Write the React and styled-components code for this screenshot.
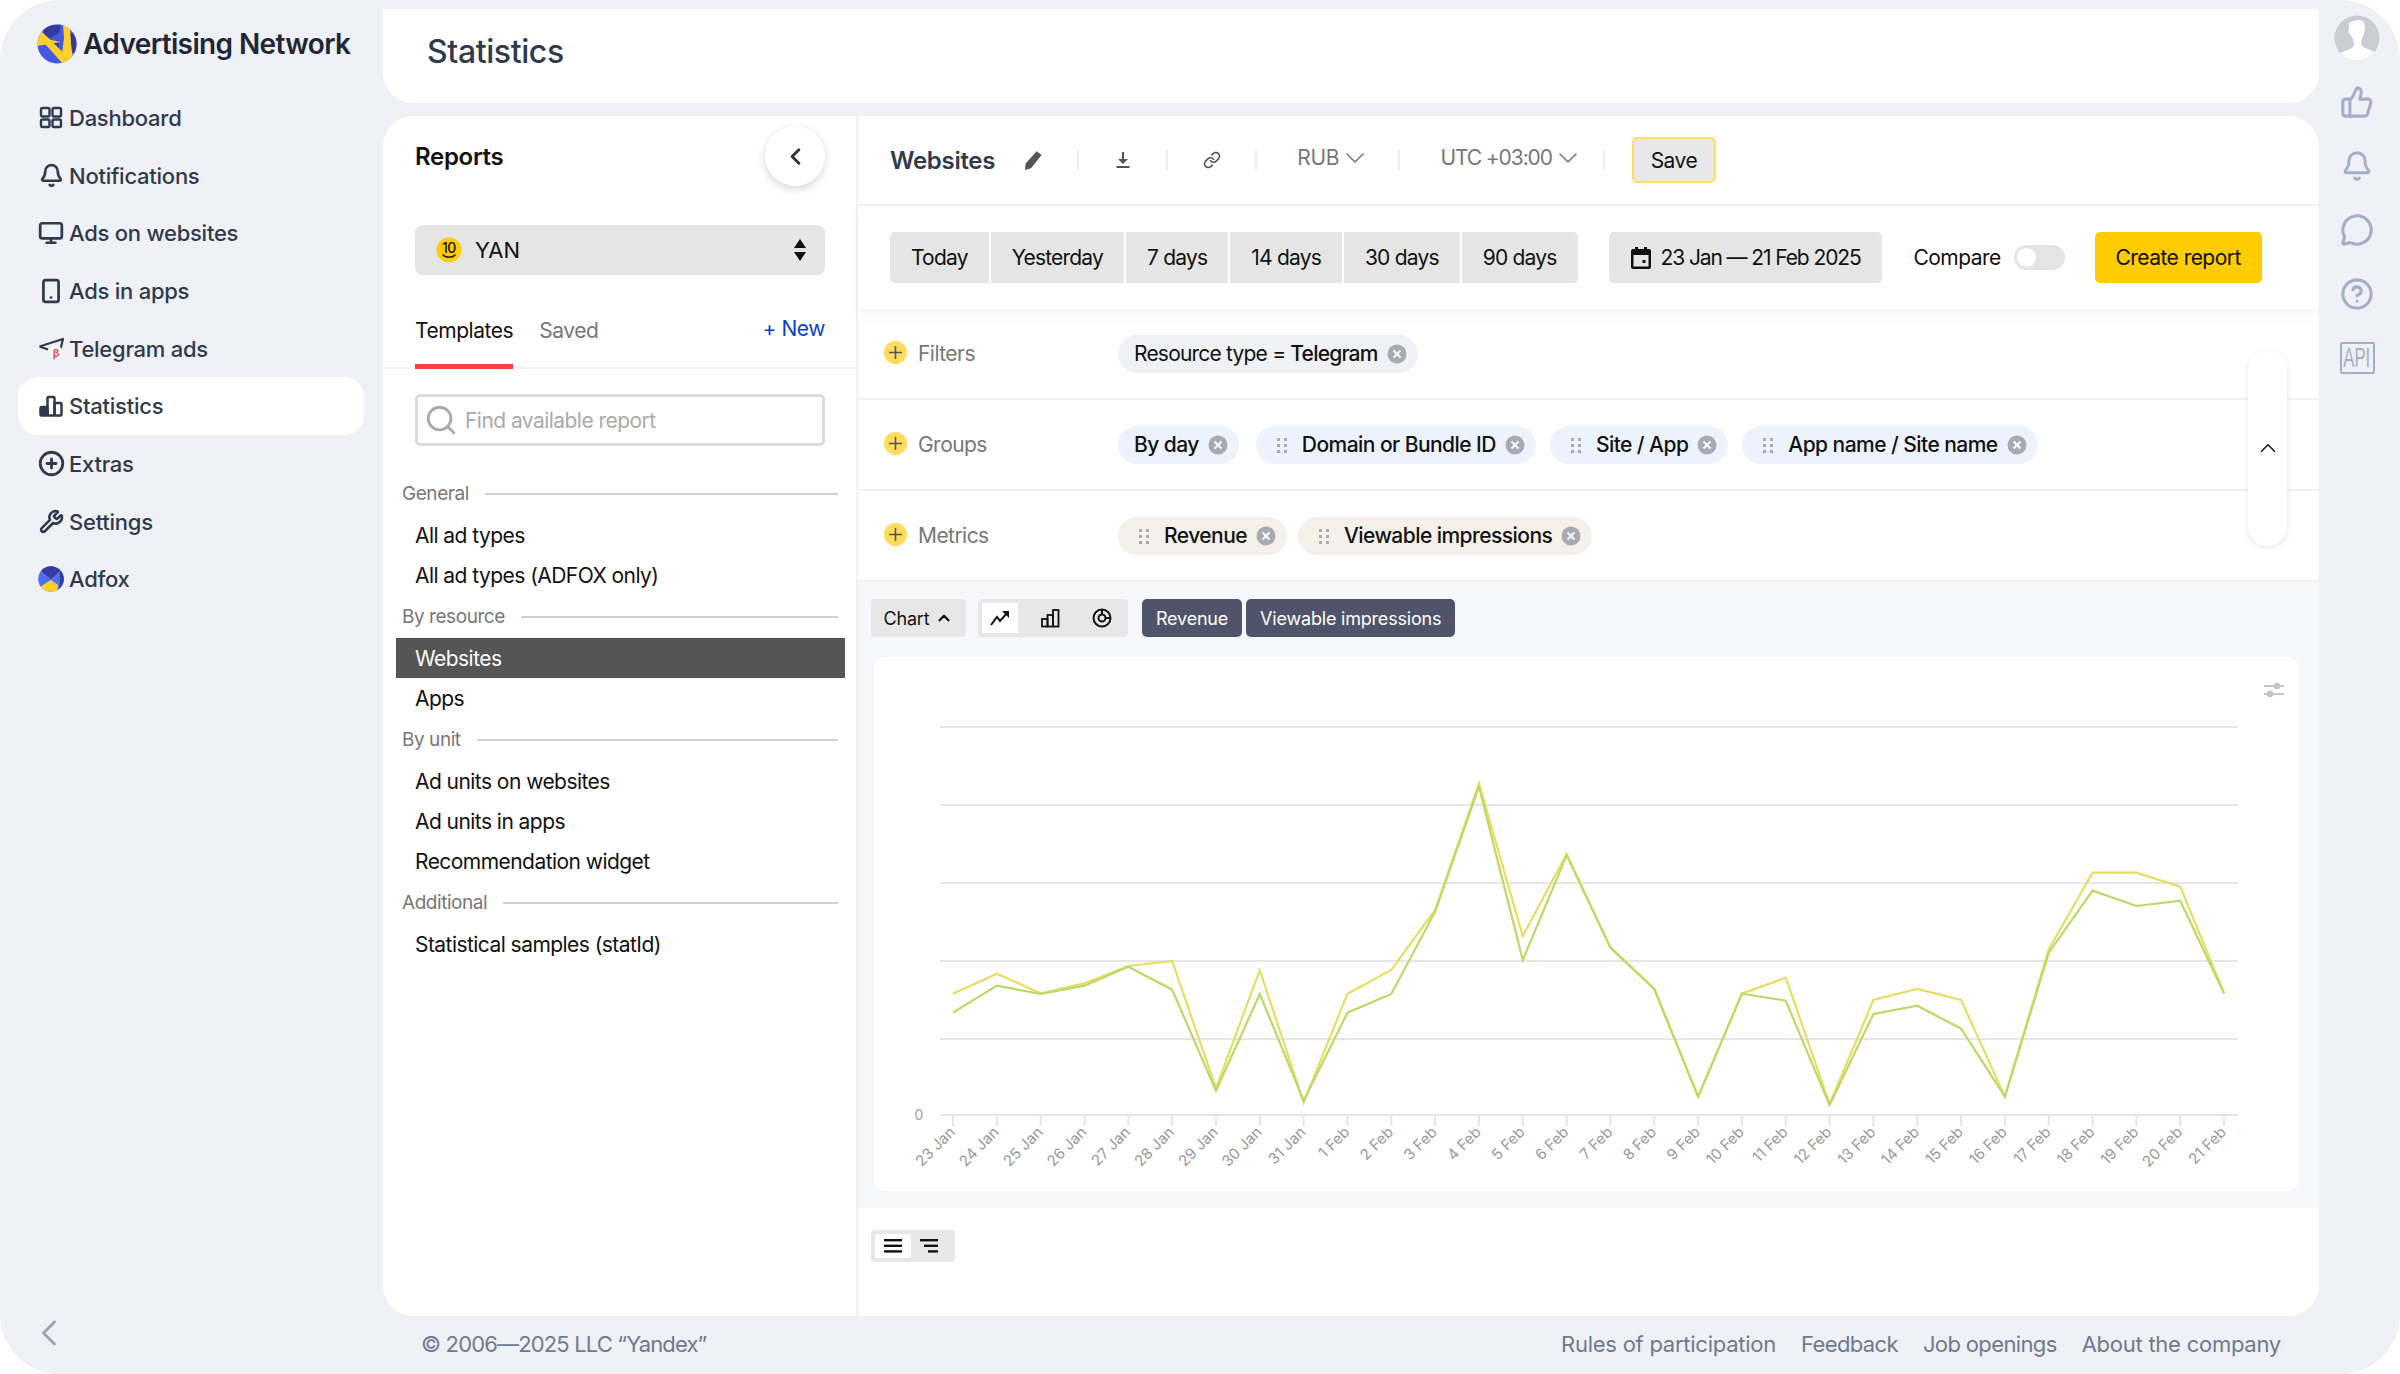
import React from "react";
import styled, { createGlobalStyle } from "styled-components";
import {
  Bell,
  ChevronDown,
  ChevronLeft,
  ChevronUp,
  CircleHelp,
  CirclePlus,
  Link,
  MessageCircle,
  Monitor,
  Search,
  Smartphone,
  ThumbsUp,
  Wrench,
} from "lucide-react";

const GlobalStyle = createGlobalStyle`
  html, body {
    margin: 0;
    padding: 0;
    background: #fff;
  }
  body {
    font-family: Inter, "Noto Sans", "Liberation Sans", sans-serif;
    color: #111;
  }
  * { box-sizing: border-box; }
`;

// ---------- shell ----------
const Shell = styled.div`
  width: 2400px;
  height: 1374px;
  display: flex;
  background: #eff1f6;
  border-radius: 60px;
  overflow: hidden;
`;

const Sidebar = styled.aside`
  width: 383px;
  flex: none;
  display: flex;
  flex-direction: column;
  padding: 0 19px 0 18px;
`;

const Brand = styled.div`
  height: 44px;
  margin-top: 22px;
  padding-left: 19px;
  display: flex;
  align-items: center;
  gap: 6px;
  font-size: 28px;
  font-weight: 600;
  letter-spacing: -0.62px;
  white-space: nowrap;
  color: #1f2736;
`;

const Nav = styled.nav`
  margin-top: 23px;
  display: flex;
  flex-direction: column;
`;

const NavItem = styled.div`
  height: 57.7px;
  padding-left: 20px;
  display: flex;
  align-items: center;
  gap: 5px;
  font-size: 22px;
  font-weight: 500;
  letter-spacing: -0.25px;
  color: #2f3a4d;
  border-radius: 20px;
  background: ${(p) => (p.$active ? "#fff" : "transparent")};

  svg {
    flex: none;
  }
`;

const IconSlot = styled.span`
  width: 26px;
  height: 26px;
  display: flex;
  align-items: center;
  justify-content: center;
  flex: none;
`;

const Collapse = styled.div`
  margin-top: auto;
  height: 63px;
  padding-left: 9px;
  color: #98a4bb;
`;

const Center = styled.div`
  width: 1936px;
  flex: none;
  display: flex;
  flex-direction: column;
  padding-top: 9px;
`;

const TopCard = styled.header`
  height: 94px;
  background: #fff;
  border-radius: 0 0 30px 30px;
  padding: 0 0 10px 44px;
  display: flex;
  align-items: center;
  font-size: 32px;
  font-weight: 500;
  letter-spacing: -0.4px;
  color: #2f3a4d;
`;

const MainCard = styled.main`
  margin-top: 13px;
  height: 1200px;
  background: #fff;
  border-radius: 30px;
  display: flex;
  overflow: hidden;
`;

const Footer = styled.footer`
  flex: 1;
  display: flex;
  align-items: center;
  justify-content: space-between;
  padding: 0 38px 2px 38px;
  font-size: 22px;
  letter-spacing: -0.25px;
  color: #6f7a90;
`;

const Copyright = styled.span`
  letter-spacing: -0.85px;
`;

const FooterLinks = styled.div`
  display: flex;
  gap: 25px;
`;

const FooterLink = styled.span`
  letter-spacing: ${(p) => (p.$tight ? -0.63 : -0.25)}px;
`;

const Rail = styled.aside`
  flex: 1;
  display: flex;
  flex-direction: column;
  align-items: center;
  padding: 15px 5px 0 0;
  color: #a3aec8;
`;

const RailSlot = styled.div`
  height: 64px;
  width: 100%;
  display: flex;
  align-items: center;
  justify-content: center;
  margin-top: ${(p) => p.$top || 0}px;
`;

const ApiMark = styled.div`
  width: 35px;
  height: 32px;
  border: 2px solid #a3aec8;
  border-radius: 2px;
  display: flex;
  align-items: center;
  justify-content: center;
  overflow: hidden;

  span {
    display: block;
    font-family: "Liberation Sans", sans-serif;
    font-size: 27px;
    line-height: 1;
    transform: scaleX(0.62);
    color: #a3aec8;
  }
`;

// ---------- reports panel ----------
const Reports = styled.section`
  width: 475px;
  flex: none;
  border-right: 2px solid #f2f2f2;
  display: flex;
  flex-direction: column;
`;

const ReportsHead = styled.div`
  height: 80px;
  padding: 0 31px 0 32px;
  display: flex;
  align-items: center;
  justify-content: space-between;
  font-size: 24px;
  font-weight: 600;
  letter-spacing: -0.3px;
`;

const RoundButton = styled.div`
  width: 60px;
  height: 60px;
  border-radius: 50%;
  background: #fff;
  box-shadow: 0 3px 8px rgba(0, 0, 0, 0.16);
  display: flex;
  align-items: center;
  justify-content: center;
  color: #333;
`;

const SourceSelect = styled.div`
  margin: 29px 31px 0 32px;
  height: 50px;
  border-radius: 8px;
  background: #e5e5e5;
  padding: 0 18px 0 21px;
  display: flex;
  align-items: center;
  gap: 13px;
  font-size: 22px;
`;

const SelectLabel = styled.span`
  flex: 1;
`;

const Tabs = styled.div`
  margin-top: 24px;
  height: 70px;
  padding: 0 31px 0 32px;
  border-bottom: 2px solid #f2f2f2;
  display: flex;
  gap: 26px;
  font-size: 21px;
  letter-spacing: -0.45px;
`;

const Tab = styled.div`
  height: 70px;
  padding-top: 19px;
  color: ${(p) => (p.$active ? "#111" : "#777")};
  border-bottom: ${(p) => (p.$active ? "5px solid #fc3f3d" : "0")};
`;

const NewLink = styled.div`
  margin-left: auto;
  padding-top: 17px;
  color: #0c41c8;
`;

const SearchBox = styled.div`
  margin: 25px 31px 0 32px;
  height: 52px;
  border: 3px solid #dcdcdc;
  border-radius: 5px;
  padding: 0 8px;
  display: flex;
  align-items: center;
  gap: 9px;
  font-size: 21px;
  letter-spacing: -0.55px;
  color: #aaa;

  svg {
    margin: -2px;
  }
`;

const ReportList = styled.div`
  margin: 26px 11px 0 13px;
  display: flex;
  flex-direction: column;
`;

const GroupHead = styled.div`
  height: 43px;
  padding: 0 7px 0 6px;
  display: flex;
  align-items: center;
  gap: 16px;
  font-size: 19px;
  letter-spacing: -0.45px;
  color: #777;

  &::after {
    content: "";
    flex: 1;
    height: 2px;
    background: #cfcfcf;
  }
`;

const ReportItem = styled.div`
  height: 40px;
  padding-left: 19px;
  display: flex;
  align-items: center;
  font-size: 21px;
  letter-spacing: -0.55px;
  background: ${(p) => (p.$active ? "#555" : "transparent")};
  color: ${(p) => (p.$active ? "#fff" : "#111")};
`;

// ---------- workspace ----------
const Workspace = styled.section`
  flex: 1;
  min-width: 0;
  display: flex;
  flex-direction: column;
`;

const Toolbar = styled.div`
  height: 90px;
  padding-left: 32px;
  border-bottom: 2px solid #f2f2f2;
  display: flex;
  align-items: center;
`;

const ReportTitle = styled.div`
  font-size: 24px;
  font-weight: 600;
  letter-spacing: -0.3px;
  color: #2f3a4d;
  margin-right: 28px;
`;

const ToolIcon = styled.div`
  width: 20px;
  height: 24px;
  display: flex;
  align-items: center;
  justify-content: center;
  color: #555;
`;

const ToolSep = styled.div`
  width: 2px;
  height: 20px;
  background: #eee;
  margin: 0 ${(p) => p.$right}px 0 ${(p) => p.$left}px;
`;

const Dropdown = styled.div`
  display: flex;
  align-items: center;
  gap: 8px;
  font-size: 21px;
  letter-spacing: ${(p) => p.$spacing || -0.2}px;
  color: #777;
  margin-top: -5px;

  svg {
    margin: -8px;
  }
`;

const SaveButton = styled.div`
  width: 84px;
  height: 46px;
  border: 2px solid #ffdf60;
  border-radius: 5px;
  background: #e8e8e8;
  display: flex;
  align-items: center;
  justify-content: center;
  font-size: 21px;
  letter-spacing: -0.55px;
`;

const PeriodBar = styled.div`
  height: 103px;
  padding-left: 32px;
  display: flex;
  align-items: center;
  position: relative;
  z-index: 1;
  box-shadow: 0 6px 14px rgba(0, 0, 0, 0.045);
`;

const Segments = styled.div`
  display: flex;
  gap: 2px;
  margin-right: 31px;
`;

const Segment = styled.div`
  height: 51px;
  padding: 0 21px;
  display: flex;
  align-items: center;
  background: #e5e5e5;
  font-size: 21px;
  letter-spacing: -0.8px;
  &:first-child {
    border-radius: 5px 0 0 5px;
  }
  &:last-child {
    border-radius: 0 5px 5px 0;
  }
`;

const DateButton = styled.div`
  width: 273px;
  height: 51px;
  border-radius: 5px;
  background: #e5e5e5;
  padding-left: 21px;
  display: flex;
  align-items: center;
  gap: 9px;
  font-size: 21px;
  letter-spacing: -1.1px;
`;

const CompareLabel = styled.div`
  margin-left: 32px;
  font-size: 21px;
  letter-spacing: -0.55px;
`;

const Toggle = styled.div`
  margin-left: 13px;
  width: 51px;
  height: 25px;
  border-radius: 13px;
  background: #e4e4e4;
  padding: 3px;

  &::before {
    content: "";
    display: block;
    width: 19px;
    height: 19px;
    border-radius: 50%;
    background: #fff;
  }
`;

const CreateButton = styled.div`
  margin-left: 30px;
  width: 167px;
  height: 51px;
  border-radius: 5px;
  background: #ffcc00;
  display: flex;
  align-items: center;
  justify-content: center;
  font-size: 21px;
  letter-spacing: -0.55px;
`;

const Fields = styled.div`
  position: relative;
`;

const FieldRow = styled.div`
  height: 91px;
  padding-left: 26px;
  border-bottom: 2px solid #f2f2f2;
  display: flex;
  align-items: center;
`;

const PlusDot = styled.span`
  width: 23px;
  height: 23px;
  border-radius: 50%;
  background: #ffdc60;
  color: #555;
  flex: none;
  display: flex;
  align-items: center;
  justify-content: center;
  margin-top: -2px;
`;

const FieldLabel = styled.div`
  width: 200px;
  margin-left: 11px;
  font-size: 21px;
  letter-spacing: -0.55px;
  color: #777;
`;

const CHIP_BG = { filter: "#f0f1f4", group: "#ecf3fd", metric: "#f5f1ea" };

const Chips = styled.div`
  display: flex;
  gap: ${(p) => p.$gap || 14}px;
`;

const Chip = styled.div`
  height: 38px;
  border-radius: 19px;
  padding: 0 11px 0 ${(p) => (p.$drag ? 21 : 16)}px;
  margin-right: ${(p) => (p.$drag ? 0 : 3)}px;
  background: ${(p) => CHIP_BG[p.$kind]};
  display: flex;
  align-items: center;
  font-size: 21px;
  letter-spacing: ${(p) => (p.$kind === "filter" ? -0.8 : -0.55)}px;
  white-space: pre;

  b {
    font-weight: 500;
  }
`;

const ChipText = styled.span`
  margin: 0 9px 0 ${(p) => (p.$drag ? 15 : 0)}px;
  font-weight: ${(p) => (p.$strong ? 500 : 400)};
`;

const ScrollPill = styled.div`
  position: absolute;
  right: 32px;
  top: 41px;
  width: 39px;
  height: 196px;
  border-radius: 20px;
  background: #fff;
  box-shadow: 0 2px 6px rgba(0, 0, 0, 0.09);
  display: flex;
  align-items: center;
  justify-content: center;
  color: #222;
`;

const ChartArea = styled.div`
  height: 626px;
  background: #f6f7fa;
  padding: 17px 20px 17px 13px;
  display: flex;
  flex-direction: column;
`;

const ChartControls = styled.div`
  height: 38px;
  display: flex;
  align-items: center;
  font-size: 18px;
  letter-spacing: -0.2px;
`;

const ChartMode = styled.div`
  width: 95px;
  height: 38px;
  border-radius: 4px;
  background: #e7e7e7;
  display: flex;
  align-items: center;
  justify-content: center;
  gap: 6px;
  margin-right: 12px;
`;

const ChartTypes = styled.div`
  width: 150px;
  height: 38px;
  border-radius: 4px;
  background: #e7e7e7;
  padding: 4px;
  display: flex;
  gap: 15px;
  margin-right: 14px;
`;

const ChartType = styled.div`
  width: 36px;
  height: 30px;
  display: flex;
  align-items: center;
  justify-content: center;
  background: ${(p) => (p.$active ? "#fff" : "transparent")};
`;

const MetricButton = styled.div`
  height: 38px;
  padding: 0 14px;
  border-radius: 5px;
  background: #50546a;
  color: #fff;
  display: flex;
  align-items: center;
  margin-right: 4px;
`;

const ChartCard = styled.div`
  position: relative;
  margin-top: 20px;
  margin-left: 3px;
  width: 1425px;
  height: 534px;
  border-radius: 12px;
  background: #fff;

  > svg {
    display: block;
  }
`;

const ChartSettings = styled.div`
  position: absolute;
  right: 15px;
  top: 24px;
`;

const ViewArea = styled.div`
  flex: 1;
  padding: 22px 0 0 13px;
`;

const ViewToggle = styled.div`
  width: 84px;
  height: 32px;
  border-radius: 4px;
  background: #e7e7e7;
  padding: 4px;
  display: flex;
`;

const ViewOption = styled.div`
  width: 36px;
  height: 24px;
  display: flex;
  align-items: center;
  justify-content: center;
  background: ${(p) => (p.$active ? "#fff" : "transparent")};
`;

// ---------- drawings ----------
const Logo = () => (
  <svg width="40" height="40" viewBox="0 0 40 40">
    <defs>
      <clipPath id="logoClip">
        <circle cx="20" cy="20" r="19.5" />
      </clipPath>
    </defs>
    <g clipPath="url(#logoClip)">
      <rect width="40" height="40" fill="#4259e0" />
      <path d="M5 3 24 0l-2 9-9 5-6-4z" fill="#343a9e" />
      <path d="M33 9h7v20h-6z" fill="#343a9e" />
      <path d="M13 27 21 15l2 15z" fill="#343a9e" />
      <path d="M0 11 5 8l27 26-6 6z" fill="#ffd02a" />
      <path d="M26 0l7 3 1 17 2 14-8 6-3-10 2-16z" fill="#ffd02a" />
      <path d="M0 13 24 18 0 22z" fill="#ffd02a" />
    </g>
  </svg>
);

const AdfoxIcon = () => (
  <svg width="26" height="26" viewBox="0 0 26 26">
    <defs>
      <clipPath id="adfoxClip">
        <circle cx="13" cy="13" r="12.8" />
      </clipPath>
    </defs>
    <g clipPath="url(#adfoxClip)">
      <rect width="26" height="26" fill="#4f6ef0" />
      <path d="M2 4 13-1l10 5-10 9z" fill="#343a9e" />
      <path d="M22 5h4v20h-5l1-11z" fill="#343a9e" />
      <path d="M2 21 13 14l7 5-1 7H7z" fill="#ffd02a" />
    </g>
  </svg>
);

const GridIcon = () => (
  <svg width="24" height="24" viewBox="0 0 24 24" fill="none" stroke="currentColor" strokeWidth="2.4">
    <rect x="2" y="2" width="8.5" height="8.5" rx="1.5" />
    <rect x="13.5" y="2" width="8.5" height="8.5" rx="1.5" />
    <rect x="2" y="13.5" width="8.5" height="7.5" rx="1.5" />
    <rect x="13.5" y="13.5" width="8.5" height="7.5" rx="1.5" />
  </svg>
);

const TelegramIcon = () => (
  <svg width="26" height="24" viewBox="0 0 26 24">
    <path d="M1.5 9.5 25 2l-3 12M1.5 9.5 10 12.5" fill="none" stroke="#2f3a4d" strokeWidth="2.2" strokeLinejoin="round" />
    <circle cx="18" cy="15" r="6.5" fill="#fff" />
    <text x="18" y="19.5" textAnchor="middle" fontSize="11" fontWeight="600" fill="#f33" fontFamily="Inter, sans-serif">β</text>
  </svg>
);

const BarsIcon = () => (
  <svg width="24" height="24" viewBox="0 0 24 24" fill="none" stroke="currentColor" strokeWidth="2.5" strokeLinejoin="round">
    <rect x="1.5" y="13" width="7" height="8.5" rx="1" fill="currentColor" />
    <rect x="8.5" y="3" width="7" height="18.5" rx="1" />
    <rect x="15.5" y="9" width="7" height="12.5" rx="1" />
  </svg>
);

const AvatarIcon = () => (
  <svg width="46" height="46" viewBox="0 0 46 46">
    <defs>
      <clipPath id="avatarClip">
        <circle cx="23" cy="23" r="22.5" />
      </clipPath>
    </defs>
    <circle cx="23" cy="23" r="22.5" fill="#c9ccd3" />
    <g clipPath="url(#avatarClip)" fill="#fff">
      <path d="M15 8c3-3 12-4 15-1l1 7-1 5-2 4-1 6 2 3 12 5v10H6V38l12-5 2-3-1-6-3-5-2-2 1-3z" />
    </g>
  </svg>
);

const PencilIcon = () => (
  <svg width="20" height="20" viewBox="0 0 20 20" fill="#555">
    <path d="M13.6 1.2 18.6 5 8 18.2 2 20l.6-6.4z" />
  </svg>
);

const DownloadIcon = () => (
  <svg width="16" height="20" viewBox="0 0 16 20" fill="#555">
    <path d="M7 2h2v7h4l-5 5-5-5h4z" />
    <rect x="1.5" y="16" width="13" height="2" />
  </svg>
);

const CalendarIcon = () => (
  <svg width="22" height="24" viewBox="0 0 22 24">
    <path d="M1 5a2 2 0 0 1 2-2h2V1h3v2h6V1h3v2h2a2 2 0 0 1 2 2v16a2 2 0 0 1-2 2H3a2 2 0 0 1-2-2z" fill="#111" />
    <rect x="3.5" y="9" width="15" height="11.5" fill="#e5e5e5" />
    <rect x="12.5" y="14" width="3" height="3" fill="#111" />
  </svg>
);

const SortIcon = () => (
  <svg width="14" height="22" viewBox="0 0 14 22" fill="#111">
    <path d="M7 0 13 9H1z" />
    <path d="M7 22 13 13H1z" />
  </svg>
);

const BadgeIcon = () => (
  <svg width="26" height="26" viewBox="0 0 26 26">
    <circle cx="13" cy="13" r="12.5" fill="#ffcc00" />
    <text x="13" y="16" textAnchor="middle" fontSize="14" fontWeight="500" letterSpacing="-0.5" fill="#111" fontFamily="Inter, sans-serif">10</text>
    <path d="M6.5 17.5c3 3.5 10 3.5 13 0" fill="none" stroke="#111" strokeWidth="1.2" />
  </svg>
);

const CloseDot = () => (
  <svg width="20" height="20" viewBox="0 0 20 20" style={{ flex: "none" }}>
    <circle cx="10" cy="10" r="9.5" fill="#a8aab2" />
    <path d="M6.5 6.5l7 7m0-7-7 7" stroke="#fff" strokeWidth="2" />
  </svg>
);

const DragDots = () => (
  <svg width="10" height="16" viewBox="0 0 10 16" fill="#a9abb3" style={{ flex: "none" }}>
    <rect x="0" y="1" width="3" height="3" />
    <rect x="7" y="1" width="3" height="3" />
    <rect x="0" y="7" width="3" height="3" />
    <rect x="7" y="7" width="3" height="3" />
    <rect x="0" y="13" width="3" height="3" />
    <rect x="7" y="13" width="3" height="3" />
  </svg>
);

const PlusIcon = () => (
  <svg width="13" height="13" viewBox="0 0 13 13" stroke="#555" strokeWidth="1.6">
    <path d="M6.5 0v13M0 6.5h13" />
  </svg>
);

const TrendIcon = () => (
  <svg width="20" height="16" viewBox="0 0 20 16" fill="none" stroke="#111" strokeWidth="2">
    <path d="M1 15 7 7l3 4 8-9" />
    <path d="M12 1h7v7" fill="#111" stroke="none" />
  </svg>
);

const ColumnsIcon = () => (
  <svg width="20" height="20" viewBox="0 0 20 20" fill="none" stroke="#111" strokeWidth="1.8">
    <rect x="1" y="11" width="5.5" height="7.5" />
    <rect x="6.5" y="7" width="5.5" height="11.5" />
    <rect x="12" y="2" width="5.5" height="16.5" />
  </svg>
);

const DonutIcon = () => (
  <svg width="20" height="20" viewBox="0 0 20 20" fill="none" stroke="#111" strokeWidth="2">
    <circle cx="10" cy="10" r="8.5" />
    <circle cx="10" cy="10" r="3.5" />
    <path d="M10 1.5v5M13 10h5.5" />
  </svg>
);

const RowsIcon = ({ stepped }) => (
  <svg width="18" height="14" viewBox="0 0 18 14" fill="#111">
    <rect x="0" y="0" width="18" height="2.4" />
    <rect x={stepped ? 4 : 0} y="5.6" width={stepped ? 14 : 18} height="2.4" />
    <rect x={stepped ? 8 : 0} y="11.2" width={stepped ? 10 : 18} height="2.4" />
  </svg>
);

const SlidersIcon = () => (
  <svg width="20" height="18" viewBox="0 0 20 18" fill="#c4c4c4">
    <rect x="0" y="4" width="20" height="2" />
    <rect x="0" y="12" width="20" height="2" />
    <circle cx="13" cy="5" r="3.2" />
    <circle cx="6" cy="13" r="3.2" />
  </svg>
);

// ---------- chart ----------
const yellow = [941, 881, 940, 910, 858, 843, 1225, 870, 1268, 941, 870, 690, 310, 768, 522, 803, 927, 1250, 941, 893, 1272, 960, 927, 960, 1250, 808, 578, 578, 620, 940];
const green = [998, 917, 942, 917, 860, 929, 1232, 942, 1262, 998, 942, 695, 320, 840, 526, 803, 927, 1250, 941, 962, 1275, 1002, 977, 1046, 1250, 818, 632, 678, 662, 940];
const days = [
  "23 Jan", "24 Jan", "25 Jan", "26 Jan", "27 Jan", "28 Jan", "29 Jan", "30 Jan", "31 Jan",
  "1 Feb", "2 Feb", "3 Feb", "4 Feb", "5 Feb", "6 Feb", "7 Feb", "8 Feb", "9 Feb", "10 Feb", "11 Feb",
  "12 Feb", "13 Feb", "14 Feb", "15 Feb", "16 Feb", "17 Feb", "18 Feb", "19 Feb", "20 Feb", "21 Feb",
];
const xAt = (i) => 79 + 43.83 * i;
const linePoints = (values) => values.map((v, i) => `${xAt(i)},${23 + v / 3}`).join(" ");

const Chart = () => (
  <svg width="1425" height="534" viewBox="0 0 1425 534">
    {[70, 148, 226, 304, 382].map((y) => (
      <line key={y} x1="66" x2="1364" y1={y} y2={y} stroke="#e6e6e6" strokeWidth="2" />
    ))}
    <line x1="66" x2="1364" y1="458" y2="458" stroke="#e6e6e6" strokeWidth="2" />
    {days.map((d, i) => (
      <g key={d}>
        <line x1={xAt(i)} x2={xAt(i)} y1="458" y2="469" stroke="#e6e6e6" strokeWidth="2" />
        <text
          x={xAt(i) + 3}
          y="476"
          textAnchor="end"
          fontSize="15"
          fill="#999"
          fontFamily="Inter, sans-serif"
          transform={`rotate(-45 ${xAt(i) + 3} 476)`}
        >
          {d}
        </text>
      </g>
    ))}
    <text x="45" y="463" textAnchor="middle" fontSize="14" fill="#a3a3a3" fontFamily="Inter, sans-serif">0</text>
    <polyline points={linePoints(yellow)} fill="none" stroke="#e8dd63" strokeWidth="2.2" />
    <polyline points={linePoints(green)} fill="none" stroke="#bcd967" strokeWidth="2.2" />
  </svg>
);

// ---------- data ----------
const navItems = [
  { label: "Dashboard", icon: <GridIcon /> },
  { label: "Notifications", icon: <Bell size={25} strokeWidth={2.5} /> },
  { label: "Ads on websites", icon: <Monitor size={26} strokeWidth={2.5} /> },
  { label: "Ads in apps", icon: <Smartphone size={26} strokeWidth={2.5} /> },
  { label: "Telegram ads", icon: <TelegramIcon /> },
  { label: "Statistics", icon: <BarsIcon />, active: true },
  { label: "Extras", icon: <CirclePlus size={27} strokeWidth={2.5} /> },
  { label: "Settings", icon: <Wrench size={25} strokeWidth={2.5} /> },
  { label: "Adfox", icon: <AdfoxIcon /> },
];

const reportGroups = [
  { title: "General", items: ["All ad types", "All ad types (ADFOX only)"] },
  { title: "By resource", items: ["Websites", "Apps"] },
  { title: "By unit", items: ["Ad units on websites", "Ad units in apps", "Recommendation widget"] },
  { title: "Additional", items: ["Statistical samples (statId)"] },
];

const periods = ["Today", "Yesterday", "7 days", "14 days", "30 days", "90 days"];

const FieldChip = ({ kind, drag, strong, children }) => (
  <Chip $kind={kind} $drag={drag}>
    {drag && <DragDots />}
    <ChipText $drag={drag} $strong={strong}>{children}</ChipText>
    <CloseDot />
  </Chip>
);

const App = () => (
  <Shell>
    <GlobalStyle />
    <Sidebar>
      <Brand>
        <Logo />
        Advertising Network
      </Brand>
      <Nav>
        {navItems.map((item) => (
          <NavItem key={item.label} $active={item.active}>
            <IconSlot>{item.icon}</IconSlot>
            {item.label}
          </NavItem>
        ))}
      </Nav>
      <Collapse>
        <ChevronLeft size={44} strokeWidth={1.5} />
      </Collapse>
    </Sidebar>

    <Center>
      <TopCard>Statistics</TopCard>
      <MainCard>
        <Reports>
          <ReportsHead>
            Reports
            <RoundButton>
              <ChevronLeft size={27} strokeWidth={2.6} />
            </RoundButton>
          </ReportsHead>
          <SourceSelect>
            <BadgeIcon />
            <SelectLabel>YAN</SelectLabel>
            <SortIcon />
          </SourceSelect>
          <Tabs>
            <Tab $active>Templates</Tab>
            <Tab>Saved</Tab>
            <NewLink>+ New</NewLink>
          </Tabs>
          <SearchBox>
            <Search size={34} color="#aaa" strokeWidth={2} />
            Find available report
          </SearchBox>
          <ReportList>
            {reportGroups.map((group) => (
              <React.Fragment key={group.title}>
                <GroupHead>{group.title}</GroupHead>
                {group.items.map((item) => (
                  <ReportItem key={item} $active={item === "Websites"}>{item}</ReportItem>
                ))}
              </React.Fragment>
            ))}
          </ReportList>
        </Reports>

        <Workspace>
          <Toolbar>
            <ReportTitle>Websites</ReportTitle>
            <ToolIcon><PencilIcon /></ToolIcon>
            <ToolSep $left={34} $right={34} />
            <ToolIcon><DownloadIcon /></ToolIcon>
            <ToolSep $left={33} $right={34} />
            <ToolIcon><Link size={18} strokeWidth={2.2} /></ToolIcon>
            <ToolSep $left={33} $right={40} />
            <Dropdown>RUB <ChevronDown size={32} strokeWidth={1.2} /></Dropdown>
            <ToolSep $left={35} $right={40} />
            <Dropdown $spacing={-1.1}>UTC +03:00 <ChevronDown size={32} strokeWidth={1.2} /></Dropdown>
            <ToolSep $left={27} $right={27} />
            <SaveButton>Save</SaveButton>
          </Toolbar>

          <PeriodBar>
            <Segments>
              {periods.map((p) => (
                <Segment key={p}>{p}</Segment>
              ))}
            </Segments>
            <DateButton>
              <CalendarIcon />
              23 Jan — 21 Feb 2025
            </DateButton>
            <CompareLabel>Compare</CompareLabel>
            <Toggle />
            <CreateButton>Create report</CreateButton>
          </PeriodBar>

          <Fields>
            <FieldRow>
              <PlusDot><PlusIcon /></PlusDot>
              <FieldLabel>Filters</FieldLabel>
              <Chips>
                <FieldChip kind="filter">Resource type = <b>Telegram</b></FieldChip>
              </Chips>
            </FieldRow>
            <FieldRow>
              <PlusDot><PlusIcon /></PlusDot>
              <FieldLabel>Groups</FieldLabel>
              <Chips>
                <FieldChip kind="group" strong>By day</FieldChip>
                <FieldChip kind="group" strong drag>Domain or Bundle ID</FieldChip>
                <FieldChip kind="group" strong drag>Site / App</FieldChip>
                <FieldChip kind="group" strong drag>App name / Site name</FieldChip>
              </Chips>
            </FieldRow>
            <FieldRow>
              <PlusDot><PlusIcon /></PlusDot>
              <FieldLabel>Metrics</FieldLabel>
              <Chips $gap={11}>
                <FieldChip kind="metric" strong drag>Revenue</FieldChip>
                <FieldChip kind="metric" strong drag>Viewable impressions</FieldChip>
              </Chips>
            </FieldRow>
            <ScrollPill>
              <ChevronUp size={26} strokeWidth={1.6} />
            </ScrollPill>
          </Fields>

          <ChartArea>
            <ChartControls>
              <ChartMode>Chart <ChevronUp size={18} strokeWidth={3} /></ChartMode>
              <ChartTypes>
                <ChartType $active><TrendIcon /></ChartType>
                <ChartType><ColumnsIcon /></ChartType>
                <ChartType><DonutIcon /></ChartType>
              </ChartTypes>
              <MetricButton>Revenue</MetricButton>
              <MetricButton>Viewable impressions</MetricButton>
            </ChartControls>
            <ChartCard>
              <Chart />
              <ChartSettings><SlidersIcon /></ChartSettings>
            </ChartCard>
          </ChartArea>

          <ViewArea>
            <ViewToggle>
              <ViewOption $active><RowsIcon /></ViewOption>
              <ViewOption><RowsIcon stepped /></ViewOption>
            </ViewToggle>
          </ViewArea>
        </Workspace>
      </MainCard>
      <Footer>
        <Copyright>© 2006—2025 LLC “Yandex”</Copyright>
        <FooterLinks>
          <FooterLink>Rules of participation</FooterLink>
          <FooterLink $tight>Feedback</FooterLink>
          <FooterLink $tight>Job openings</FooterLink>
          <FooterLink>About the company</FooterLink>
        </FooterLinks>
      </Footer>
    </Center>

    <Rail>
      <AvatarIcon />
      <RailSlot $top={9}><ThumbsUp size={34} strokeWidth={2.2} /></RailSlot>
      <RailSlot><Bell size={32} strokeWidth={2.2} /></RailSlot>
      <RailSlot><MessageCircle size={34} strokeWidth={2.2} /></RailSlot>
      <RailSlot><CircleHelp size={34} strokeWidth={2.2} /></RailSlot>
      <RailSlot><ApiMark><span>API</span></ApiMark></RailSlot>
    </Rail>
  </Shell>
);

export default App;
